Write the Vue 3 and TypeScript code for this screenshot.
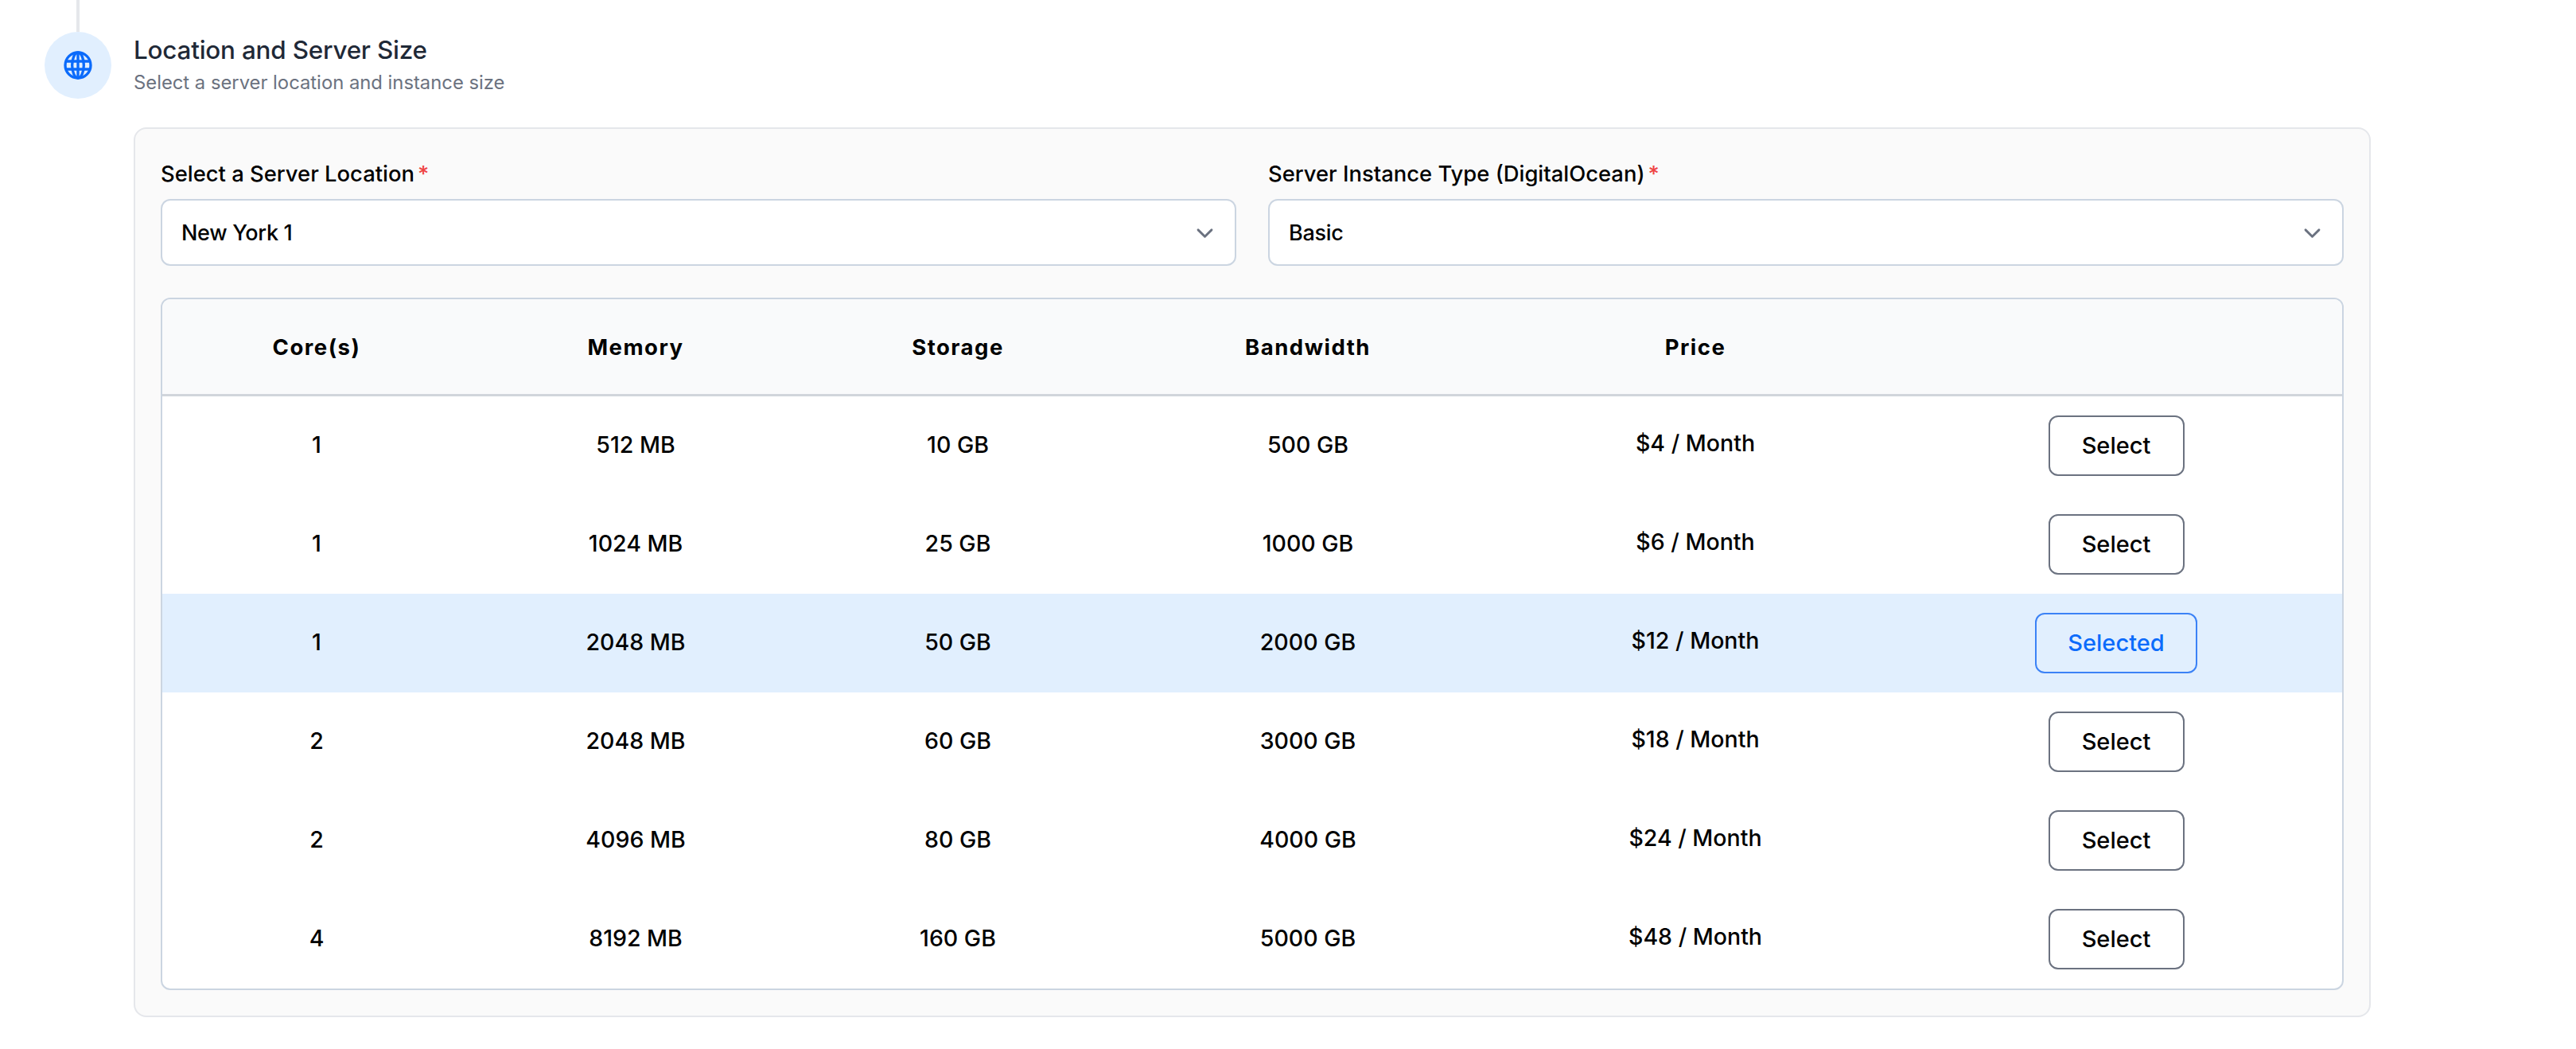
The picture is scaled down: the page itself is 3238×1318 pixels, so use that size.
<script setup lang="ts">
interface Plan { cores: number; memory: string; storage: string; bandwidth: string; price: string; selected?: boolean }
const plans: Plan[] = [
  { cores: 1, memory: '512 MB', storage: '10 GB', bandwidth: '500 GB', price: '$4 / Month' },
  { cores: 1, memory: '1024 MB', storage: '25 GB', bandwidth: '1000 GB', price: '$6 / Month' },
  { cores: 1, memory: '2048 MB', storage: '50 GB', bandwidth: '2000 GB', price: '$12 / Month', selected: true },
  { cores: 2, memory: '2048 MB', storage: '60 GB', bandwidth: '3000 GB', price: '$18 / Month' },
  { cores: 2, memory: '4096 MB', storage: '80 GB', bandwidth: '4000 GB', price: '$24 / Month' },
  { cores: 4, memory: '8192 MB', storage: '160 GB', bandwidth: '5000 GB', price: '$48 / Month' },
]
</script>

<template>
  <div class="page">
    <div class="rail">
      <div class="line"></div>
      <div class="circle">
        <svg width="40" height="40" viewBox="0 0 24 24" fill="none" stroke="#0b6bfb" stroke-width="2">
          <circle cx="12" cy="12" r="9.6" />
          <ellipse cx="12" cy="12" rx="4.4" ry="9.6" />
          <path d="M12 2.4V21.6M3 9H21M3 15H21" />
        </svg>
      </div>
    </div>
    <div class="body">
      <h2 class="title">Location and Server Size</h2>
      <p class="sub">Select a server location and instance size</p>
      <div class="card">
        <div class="fields">
          <div class="field">
            <label class="label">Select a Server Location<span class="star">*</span></label>
            <div class="select">
              <span>New York 1</span>
              <svg width="29" height="29" viewBox="0 0 24 24" fill="none" stroke="#6b7280" stroke-width="2.4" stroke-linecap="round" stroke-linejoin="round"><path d="M5 9l7 7 7-7" /></svg>
            </div>
          </div>
          <div class="field">
            <label class="label">Server Instance Type (DigitalOcean)<span class="star">*</span></label>
            <div class="select">
              <span>Basic</span>
              <svg width="29" height="29" viewBox="0 0 24 24" fill="none" stroke="#6b7280" stroke-width="2.4" stroke-linecap="round" stroke-linejoin="round"><path d="M5 9l7 7 7-7" /></svg>
            </div>
          </div>
        </div>
        <div class="table">
          <div class="row head">
            <div>Core(s)</div><div>Memory</div><div>Storage</div><div>Bandwidth</div><div>Price</div><div></div>
          </div>
          <div v-for="(p, i) in plans" :key="i" class="row" :class="{ active: p.selected }">
            <div class="cell">{{ p.cores }}</div>
            <div class="cell">{{ p.memory }}</div>
            <div class="cell">{{ p.storage }}</div>
            <div class="cell">{{ p.bandwidth }}</div>
            <div class="price">{{ p.price }}</div>
            <div><button class="btn" :class="{ on: p.selected }">{{ p.selected ? 'Selected' : 'Select' }}</button></div>
          </div>
        </div>
      </div>
    </div>
  </div>
</template>

<style scoped>
.page {
  display: flex;
  gap: 28px;
  padding-left: 56px;
  font-family: Inter, "Liberation Sans", sans-serif;
  color: #000;
  background: #fff;
  width: 3238px;
  height: 1318px;
  box-sizing: border-box;
}
.rail { width: 84px; display: flex; flex-direction: column; align-items: center; }
.line { width: 4px; height: 40px; background: #e5e7eb; }
.circle { width: 84px; height: 84px; border-radius: 50%; background: #e1effe; display: flex; align-items: center; justify-content: center; }
.body { width: 2812px; padding-top: 43px; }
.title { margin: 0; font-size: 31.4px; line-height: 40px; font-weight: 500; color: #1f2937; letter-spacing: -0.2px; }
.sub { margin: 4px 0 0; font-size: 23.8px; line-height: 34px; color: #6b7280; }
.card { margin-top: 39px; border: 2px solid #e5e7eb; border-radius: 16px; background: #fafafa; padding: 32px; height: 1118px; box-sizing: border-box; }
.fields { display: grid; grid-template-columns: 1fr 1fr; gap: 40px; }
.label { display: block; font-size: 27.4px; line-height: 48px; font-weight: 500; }
.star { color: #ef4444; margin-left: 4px; }
.select { margin-top: 8px; height: 84px; box-sizing: border-box; border: 2px solid #cbd5e1; border-radius: 12px; background: #fff; display: flex; align-items: center; justify-content: space-between; padding: 0 23px 0 24px; font-size: 27px; font-weight: 500; letter-spacing: -0.3px; }
.table { margin-top: 40px; border: 2px solid #cbd5e1; border-radius: 12px; overflow: hidden; background: #fff; }
.row { display: grid; grid-template-columns: 388px 414px 396px 484px 490px 1fr; align-items: center; height: 124px; text-align: center; font-size: 28.5px; font-weight: 500; }
.head { height: 122px; background: #f9fafb; border-bottom: 3px solid #d1d5db; box-sizing: border-box; font-size: 27.5px; font-weight: 700; letter-spacing: 1.5px; }
.active { background: #e1effe; }
.cell { padding-bottom: 3px; }
.price { padding-bottom: 7px; }
.btn { width: 171px; height: 76px; padding: 0 0 2px; border: 2px solid #6b7280; border-radius: 12px; background: #fff; font: inherit; font-size: 29px; color: #000; cursor: pointer; }
.btn.on { width: 204px; border-color: #3b82f6; background: #e1effe; color: #0b6bfb; }
</style>
